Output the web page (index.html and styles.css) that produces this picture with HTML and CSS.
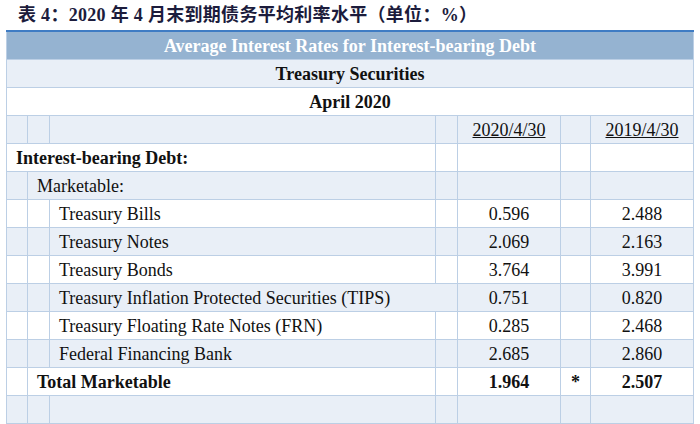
FILE: index.html
```html
<!DOCTYPE html>
<html lang="zh">
<head>
<meta charset="utf-8">
<title>表 4</title>
<link rel="stylesheet" href="styles.css">
</head>
<body>
<div class="title">表 4：2020 年 4 月末到期债务平均利率水平（单位：%）</div>
<table class="rates">
  <colgroup>
    <col class="c1"><col class="c2"><col class="c3"><col class="c4"><col class="c5"><col class="c6"><col class="c7">
  </colgroup>
  <tr class="head"><td colspan="7">Average Interest Rates for Interest-bearing Debt</td></tr>
  <tr class="alt"><td colspan="7" class="b center">Treasury Securities</td></tr>
  <tr><td colspan="7" class="b center">April 2020</td></tr>
  <tr class="alt"><td></td><td></td><td></td><td></td><td class="num"><u>2020/4/30</u></td><td></td><td class="num"><u>2019/4/30</u></td></tr>
  <tr><td colspan="3" class="b l1">Interest-bearing Debt:</td><td></td><td></td><td></td><td></td></tr>
  <tr class="alt"><td></td><td colspan="2" class="l2">Marketable:</td><td></td><td></td><td></td><td></td></tr>
  <tr><td></td><td></td><td class="l3">Treasury Bills</td><td></td><td class="num">0.596</td><td></td><td class="num">2.488</td></tr>
  <tr class="alt"><td></td><td></td><td class="l3">Treasury Notes</td><td></td><td class="num">2.069</td><td></td><td class="num">2.163</td></tr>
  <tr><td></td><td></td><td class="l3">Treasury Bonds</td><td></td><td class="num">3.764</td><td></td><td class="num">3.991</td></tr>
  <tr class="alt"><td></td><td></td><td colspan="2" class="l3">Treasury Inflation Protected Securities (TIPS)</td><td class="num">0.751</td><td></td><td class="num">0.820</td></tr>
  <tr><td></td><td></td><td class="l3">Treasury Floating Rate Notes (FRN)</td><td></td><td class="num">0.285</td><td></td><td class="num">2.468</td></tr>
  <tr class="alt"><td></td><td></td><td class="l3">Federal Financing Bank</td><td></td><td class="num">2.685</td><td></td><td class="num">2.860</td></tr>
  <tr><td></td><td colspan="2" class="b l2">Total Marketable</td><td></td><td class="num b">1.964</td><td class="num b">*</td><td class="num b">2.507</td></tr>
  <tr class="alt"><td></td><td></td><td></td><td></td><td></td><td></td><td></td></tr>
</table>
</body>
</html>
```

FILE: styles.css
```css
html, body {
  margin: 0;
  padding: 0;
  background: #ffffff;
}

.title {
  height: 30px;
  box-sizing: border-box;
  padding: 3px 0 0 18px;
  font-family: "Liberation Serif", "Noto Sans CJK SC", serif;
  font-weight: bold;
  font-size: 18px;
  line-height: 24px;
  letter-spacing: 0.3px;
  color: #1c1c3c;
}

.rates {
  margin-left: 6px;
  width: 688px;
  table-layout: fixed;
  border-collapse: collapse;
  font-family: "Liberation Serif", serif;
  font-size: 18px;
  color: #111111;
  border-top: 2px solid #3f7cc4;
}

.c1 { width: 21px; }
.c2 { width: 22px; }
.c3 { width: 386px; }
.c4 { width: 22px; }
.c5 { width: 103px; }
.c6 { width: 30px; }
.c7 { width: 103px; }

.rates td {
  height: 27px;
  padding: 0;
  border: 1px solid #bccfe5;
  line-height: 20px;
  white-space: nowrap;
  overflow: visible;
  vertical-align: middle;
}

.rates tr.alt td {
  background: #e9eff7;
}

.rates tr.head td {
  background: #95b3d1;
  color: #ffffff;
  font-weight: bold;
  text-align: center;
  border-top: none;
}

.b { font-weight: bold; }
.center { text-align: center; }
.num { text-align: center; }

.rates td.l1 { padding-left: 9px; }
.rates td.l2 { padding-left: 9px; }
.rates td.l3 { padding-left: 9px; }
```
